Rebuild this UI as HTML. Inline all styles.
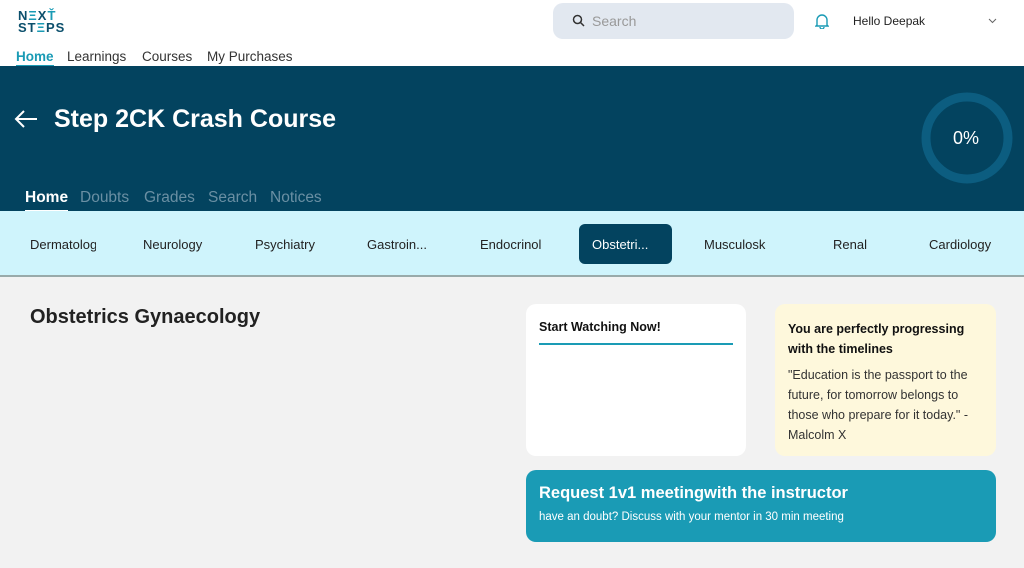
<!DOCTYPE html>
<html><head><style>
*{margin:0;padding:0;box-sizing:border-box}
body{width:1024px;height:568px;overflow:hidden;background:#f2f2f2;font-family:"Liberation Sans",sans-serif;position:relative}
.a{position:absolute}
</style></head><body>
<div class="a" style="left:0;top:0;width:1024px;height:66px;background:#fff"></div>
<div class="a" style="left:18px;top:10px;font-weight:bold;font-size:13px;line-height:12px;color:#0b4f6c;letter-spacing:1px">N<span style="color:#1a9bb5">Ξ</span>X<span style="color:#1a9bb5">Ť</span><br>ST<span style="color:#1a9bb5">Ξ</span>PS</div>
<div class="a" style="top:49px;font-size:13.5px;color:#333;left:0;width:400px">
<span class="a" style="left:16px;color:#1a9bb5;font-weight:bold;border-bottom:2px solid #1a9bb5;padding-bottom:1px">Home</span>
<span class="a" style="left:67px">Learnings</span>
<span class="a" style="left:142px">Courses</span>
<span class="a" style="left:207px">My Purchases</span></div>
<div class="a" style="left:553px;top:3px;width:241px;height:36px;background:#e2e8f0;border-radius:10px"></div>
<svg class="a" style="left:572px;top:14px" width="13" height="13" viewBox="0 0 13 13"><circle cx="5.5" cy="5.5" r="4" fill="none" stroke="#333" stroke-width="1.5"/><path d="M8.5 8.5L12 12" stroke="#333" stroke-width="1.5"/></svg>
<div class="a" style="left:592px;top:13px;font-size:14px;color:#999">Search</div>
<svg class="a" style="left:815px;top:13px" width="14" height="16" viewBox="0 0 14 16"><path d="M2 12V7a5 5 0 0110 0v5l1 1H1z M5 14a2 2 0 004 0" fill="none" stroke="#1a9bb5" stroke-width="1.4"/></svg>
<div class="a" style="left:853px;top:14px;font-size:12px;color:#222">Hello Deepak</div>
<svg class="a" style="left:988px;top:18px" width="9" height="6"><path d="M1 1l3.5 3.5L8 1" fill="none" stroke="#666" stroke-width="1"/></svg>
<div class="a" style="left:0;top:66px;width:1024px;height:145px;background:#03435f"></div>
<svg class="a" style="left:14px;top:109px" width="24" height="20"><path d="M2 10h21M10 2l-8 8 8 8" fill="none" stroke="#fff" stroke-width="2"/></svg>
<div class="a" style="left:54px;top:105px;font-size:25px;font-weight:bold;color:#fff">Step 2CK Crash Course</div>
<svg class="a" style="left:919px;top:90px" width="96" height="96"><circle cx="48" cy="48" r="41" fill="none" stroke="#0c5d80" stroke-width="9"/></svg>
<div class="a" style="left:953px;top:128px;font-size:18px;color:#fff">0%</div>
<div class="a" style="top:189px;left:0;width:400px;font-size:15.5px;color:#6a8fa3">
<span class="a" style="left:25px;color:#fff;font-weight:bold;border-bottom:2px solid #fff;padding-bottom:3px">Home</span>
<span class="a" style="left:80px">Doubts</span>
<span class="a" style="left:144px">Grades</span>
<span class="a" style="left:208px">Search</span>
<span class="a" style="left:270px">Notices</span></div>
<div class="a" style="left:0;top:211px;width:1024px;height:66px;background:#cff4fc;border-bottom:2px solid #9aa"></div>
<div class="a" style="left:579px;top:224px;width:93px;height:40px;background:#03435f;border-radius:6px"></div>
<div class="a" style="top:237px;left:0;width:1024px;font-size:13px;color:#222">
<span class="a" style="left:30px;width:66px;overflow:hidden;white-space:nowrap">Dermatology</span>
<span class="a" style="left:143px">Neurology</span>
<span class="a" style="left:255px">Psychiatry</span>
<span class="a" style="left:367px">Gastroin...</span>
<span class="a" style="left:480px">Endocrinol</span>
<span class="a" style="left:592px;color:#fff">Obstetri...</span>
<span class="a" style="left:704px">Musculosk</span>
<span class="a" style="left:833px">Renal</span>
<span class="a" style="left:929px">Cardiology</span>
</div>
<div class="a" style="left:30px;top:306px;font-size:20px;font-weight:bold;color:#222">Obstetrics Gynaecology</div>
<div class="a" style="left:526px;top:304px;width:220px;height:152px;background:#fff;border-radius:10px"></div>
<div class="a" style="left:539px;top:320px;width:194px;font-size:12.5px;font-weight:bold;color:#111;border-bottom:2px solid #1a9bb5;padding-bottom:9px">Start Watching Now!</div>
<div class="a" style="left:775px;top:304px;width:221px;height:152px;background:#fef8dc;border-radius:10px;padding:15px 13px;font-size:12.5px;line-height:20px;color:#333"><b style="color:#111">You are perfectly progressing with the timelines</b><div style="margin-top:6px;width:186px">"Education is the passport to the future, for tomorrow belongs to those who prepare for it today." - Malcolm X</div></div>
<div class="a" style="left:526px;top:470px;width:470px;height:72px;background:#1a9bb5;border-radius:10px;padding:14px 13px;color:#fff"><div style="font-size:16.5px;font-weight:bold">Request 1v1 meetingwith the instructor</div><div style="font-size:11.5px;margin-top:8px">have an doubt? Discuss with your mentor in 30 min meeting</div></div>
</body></html>
